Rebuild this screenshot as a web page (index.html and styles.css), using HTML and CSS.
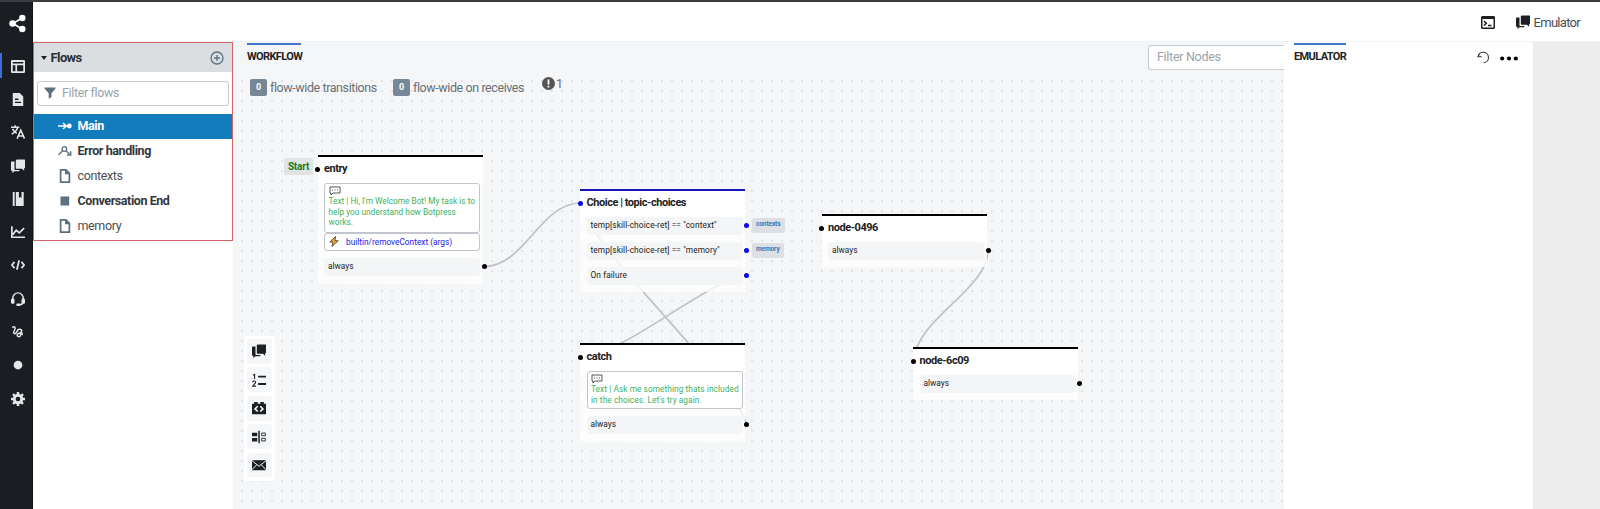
FILE: index.html
```html
<!DOCTYPE html>
<html lang="en">
<head>
<meta charset="utf-8">
<title>Workflow studio</title>
<link rel="stylesheet" href="styles.css">
</head>
<body>
<svg width="0" height="0" class="defs">
  <symbol id="chat" viewBox="0 0 16 16"><path d="M6.500.500h9l.5.500v9l-1 .5v3L12.500 11H6l-.5-.5v-9z"/><path d="M0 3.500l.5-.7H4V12l.5.500H10l-1 1.500H4L1.500 16v-2.500L0 13z"/></symbol>
  <symbol id="doc" viewBox="0 0 16 16"><path fill-rule="evenodd" d="M2 0h7.500L14 4.500V16H2zm2 2v12h8V6H8V2z"/></symbol>
  <symbol id="bubble" viewBox="0 0 12 10"><path d="M1 1h10v6H4L2 9V7H1zM3 4h1m1.500 0h1M8 4h1" fill="none" stroke="#444" stroke-width=".9"/></symbol>
</svg>
<div class="app">
  <nav class="rail">
    <div class="logo"><svg width="17" height="19" viewBox="0 0 17 19"><path d="M13 4L4 9.500 13 15" fill="none" stroke="#fff" stroke-width="1.600"/><circle cx="13.300" cy="4" r="3.200"/><circle cx="3.600" cy="9.500" r="3.300"/><circle cx="13.300" cy="15" r="3.200"/></svg></div>
    <div class="item active"><svg viewBox="0 0 16 16"><path fill-rule="evenodd" d="M1 1h14l1 1v13l-1 1H1l-1-1V2zM2 7v7h3V7zm5 0v7h7V7zM2 3.300V5h12V3.300z"/></svg></div>
    <div class="item"><svg viewBox="0 0 16 16"><path fill-rule="evenodd" d="M2 1h8l4 4v11H2zm2.500 6.500V9H8.500V7.500zm0 3.500v1.500h7V11z"/></svg></div>
    <div class="item"><svg viewBox="0 0 16 16"><path d="M0 2.500h9.500M4.700.200v2.300M.8 10.500C4 8.500 7 6 7.500 3M1.800 4.500C3 7 4.500 8.500 6.500 9.500M7 15.500L11.200 6l4.200 9.500M8.500 12.500h5.500" fill="none" stroke="#e4e6e8" stroke-width="1.800"/></svg></div>
    <div class="item"><svg viewBox="0 0 16 16"><use href="#chat"/></svg></div>
    <div class="item"><svg viewBox="0 0 16 16"><path d="M2 0h2.200v16H2zM5.500 0H9v7l1.500-1.500L12 7V0h2.500v16h-9z"/></svg></div>
    <div class="item"><svg viewBox="0 0 16 16"><path d="M1 1.500v12.500h15M2 11l4-5 3.500 3L15 3.500" fill="none" stroke="#e4e6e8" stroke-width="1.900"/></svg></div>
    <div class="item"><svg viewBox="0 0 16 16"><path d="M4 4.500L1 8l3 3.500M12 4.500L15 8l-3 3.500M9.300 2.500L6.700 13.500" fill="none" stroke="#e4e6e8" stroke-width="2"/></svg></div>
    <div class="item"><svg viewBox="0 0 16 16"><path d="M2 10V7a6 6 0 0 1 12 0v3M13.500 12c0 2-2 2.500-4 2.500" fill="none" stroke="#e4e6e8" stroke-width="1.700"/><rect y="7.500" width="4" height="6" rx="1.500"/><rect x="12" y="7.500" width="4" height="6" rx="1.500"/><rect x="6" y="13" width="5" height="3" rx="1.500"/></svg></div>
    <div class="item"><svg viewBox="0 0 16 16"><path d="M1.500 3C3 1.500 5.500 2 4.500 4.500L3.200 8c-.7 2.500 2 2.500 3 .5L8 5.500C9.500 4 13 5 12 7.500s-5 1.500-5 4 4 2.500 4 0-1-2.500 0-3 2.500 1.500 1.500 3" fill="none" stroke="#e4e6e8" stroke-width="1.700"/></svg></div>
    <div class="item"><svg viewBox="0 0 16 16"><circle cx="8" cy="8" r="5"/></svg></div>
    <div class="item"><svg viewBox="0 0 16 16"><circle cx="8" cy="8" r="4.300" fill="none" stroke="#e4e6e8" stroke-width="3.200"/><path d="M8 0v3M8 13v3M0 8h3M13 8h3M2.300 2.300l2 2M11.700 11.700l2 2M2.300 13.700l2-2M11.700 4.300l2-2" stroke="#e4e6e8" stroke-width="2.800"/></svg></div>
  </nav>
  <div class="main">
    <header class="topbar">
      <svg width="14" height="13" viewBox="0 0 14 13"><path fill-rule="evenodd" d="M1 0h12l1 1v11l-1 1H1l-1-1V1zm.500 3v8.500h11V3z"/><path d="M3 5l2.300 2.200L3 9.500M7 9.500h3.500" fill="none" stroke="#1c1f23" stroke-width="1.500"/></svg>
      <svg class="emu-icon" width="14" height="14" viewBox="0 0 16 16"><use href="#chat"/></svg>
      <span class="emu-text">Emulator</span>
    </header>
    <div class="body">
      <aside class="side">
        <div class="flows">
          <div class="flows-head"><i class="caret"></i><b>Flows</b><svg width="14" height="14" viewBox="0 0 14 14"><circle cx="7" cy="7" r="6" /><path d="M7 4v6M4 7h6"/></svg></div>
          <div class="filter"><svg width="12" height="12" viewBox="0 0 12 12"><path d="M.500.500h11v1L7.500 6.200V10L4.700 11.800V6.200L.500 1.500z"/></svg><span>Filter flows</span></div>
          <div class="row sel"><svg width="14" height="12" viewBox="0 0 14 12"><path d="M0 6h8M5 3l3.200 3L5 9" fill="none" stroke="#fff" stroke-width="1.500"/><circle cx="11.300" cy="6" r="2.400" fill="#fff"/></svg><b>Main</b></div>
          <div class="row"><svg width="14" height="12" viewBox="0 0 14 12"><path d="M.300 9.800L4.500 6M8 5.800L11.500 9M12.700 6.200v3.800H9" fill="none" stroke="#5c7080" stroke-width="1.400"/><circle cx="6.300" cy="4" r="2.300" fill="none" stroke="#5c7080" stroke-width="1.300"/></svg><b>Error handling</b></div>
          <div class="row"><svg width="14" height="14" viewBox="0 0 16 16"><use href="#doc"/></svg><span>contexts</span></div>
          <div class="row"><svg width="14" height="10" viewBox="0 0 14 10"><rect x="2.500" y=".5" width="8.700" height="9"/></svg><b>Conversation End</b></div>
          <div class="row"><svg width="14" height="14" viewBox="0 0 16 16"><use href="#doc"/></svg><span>memory</span></div>
        </div>
      </aside>
      <main class="canvas">
        <div class="dots"></div>
        <div class="canvas-head"><span class="tab">WORKFLOW</span><div class="search">Filter Nodes</div></div>
        <div class="stats"><i>0</i><span class="st1">flow-wide transitions</span><i>0</i><span class="st2">flow-wide on receives</span><svg width="13" height="13" viewBox="0 0 13 13"><circle cx="6.500" cy="6.500" r="6.500" fill="#555"/><path d="M6.500 2.500v5M6.500 8.800v1.700" stroke="#fff" stroke-width="1.800"/></svg><span class="one">1</span></div>
        <svg class="links" viewBox="233 42 1051 467" width="1051" height="467">
          <path d="M484 266.500C525 266.500 540 203 580.500 203"/>
          <path d="M746.500 275.500C710 278 624 355 580.500 357.500"/>
          <path d="M746.500 425C735 378 590 250 580.500 203"/>
          <path d="M988 250C988 290 914 320 914 361.500"/>
        </svg>
        <span class="start">Start</span>
        <section class="node n-entry"><i class="port in"></i><h3>entry</h3>
          <div class="say"><svg width="12" height="10"><use href="#bubble"/></svg><p>Text | Hi, I'm Welcome Bot! My task is to<br>help you understand how Botpress<br>works.</p></div>
          <div class="act"><svg width="10" height="11" viewBox="0 0 10 11"><path d="M6.500.500L.800 6h3L3 10.500 9.200 4.700H6z" fill="#f2a93b" stroke="#3d3325" stroke-width=".8"/></svg><span>builtin/removeContext (args)</span></div>
          <div class="cond">always<i class="port"></i></div>
        </section>
        <section class="node skill n-choice"><i class="port in"></i><h3>Choice | topic-choices</h3>
          <div class="cond">temp[skill-choice-ret] == "context"<i class="port"></i><em>contexts</em></div>
          <div class="cond">temp[skill-choice-ret] == "memory"<i class="port"></i><em>memory</em></div>
          <div class="cond">On failure<i class="port"></i></div>
        </section>
        <section class="node n-catch"><i class="port in"></i><h3>catch</h3>
          <div class="say"><svg width="12" height="10"><use href="#bubble"/></svg><p>Text | Ask me something thats included<br>in the choices. Let's try again.</p></div>
          <div class="cond">always<i class="port"></i></div>
        </section>
        <section class="node n-0496"><i class="port in"></i><h3>node-0496</h3><div class="cond">always<i class="port"></i></div></section>
        <section class="node n-6c09"><i class="port in"></i><h3>node-6c09</h3><div class="cond">always<i class="port"></i></div></section>
        <div class="tools">
          <div><svg viewBox="0 0 16 16"><use href="#chat"/></svg></div>
          <div><svg viewBox="0 0 16 16"><path d="M1 2.500l2-1V7M.800 10.500C1 8.500 4.500 8.800 4 11c-.3 1.500-3 2.500-3.200 4H4.500" fill="none" stroke="#1c1f23" stroke-width="1.200"/><path d="M7 3h9v2.200H7zM7 11.500h9v2.200H7z"/></svg></div>
          <div><svg viewBox="0 0 16 16"><path d="M0 3h2.500V1h4v2h3V1h4v2H16v12H0z"/><path d="M6.500 6L3.500 9l3 3M9.500 6l3 3-3 3" fill="none" stroke="#fff" stroke-width="1.800"/></svg></div>
          <div><svg viewBox="0 0 16 16"><path d="M0 3h6v4H0zM0 9h6v4H0zM7.200.800h1.700v14.400H7.200z"/><path d="M11 3.500h4.300v3H11zM11 9.500h4.300v3H11z" fill="none" stroke="#1c1f23"/></svg></div>
          <div><svg viewBox="0 0 16 16"><path d="M0 2.500h16v11.500H0z"/><path d="M0 3l8 6.500L16 3M0 13.500l5.500-6M16 13.500l-5.500-6" fill="none" stroke="#f5f6f8" stroke-width="1.100"/></svg></div>
        </div>
      </main>
      <aside class="emulator"><span class="tab emu-tab">EMULATOR</span><svg class="undo" width="13" height="13" viewBox="0 0 13 13"><path d="M1 5.500A5.300 5.300 0 1 1 6.500 11.800M.3 5.700h4.500M1 5.500l1.500-2.200" fill="none" stroke="#333" stroke-width="1.100"/></svg><svg width="18" height="5" viewBox="0 0 18 5"><circle cx="2.200" cy="2.500" r="2.100"/><circle cx="9" cy="2.500" r="2.100"/><circle cx="15.800" cy="2.500" r="2.100"/></svg></aside>
      <div class="gutter"></div>
    </div>
  </div>
</div>
</body>
</html>
```
FILE: styles.css
```css
* { box-sizing: border-box; }
body { margin: 0; height: 509px; overflow: hidden; font-family: Roboto, "Liberation Sans", sans-serif; font-size: 12.500px; color: #4a4f54; background: #fff; }
.defs { position: absolute; }
svg { display: block; flex: none; }
.app { display: flex; height: 509px; border-top: 2px solid #3d3c40; }
.rail { width: 33px; background: #1a1d21; border-right: 1px solid #101214; flex: none; }
.rail svg { fill: #e4e6e8; }
.logo { height: 47px; padding: 12px 0 0 8.500px; }
.logo svg { fill: #fff; }
.item { height: 33.300px; display: flex; align-items: center; padding-left: 11.300px; }
.item svg { width: 14px; height: 14px; }
.active { background: linear-gradient(#3a6fd8, #3a6fd8) 0 50% / 2px 25px no-repeat; }
.main { flex: 1; display: flex; flex-direction: column; min-width: 0; }
.topbar { height: 40px; display: flex; align-items: center; justify-content: flex-end; padding: 1px 20px 0 0; border-bottom: 1px solid #f2f3f4; }
.topbar svg { fill: #1c1f23; }
.emu-icon { margin: 0 4px 0 21px; }
.emu-text { font-size: 13px; width: 46.500px; white-space: nowrap; letter-spacing: -.7px; }
.body { flex: 1; display: flex; min-height: 0; }
.side { width: 200px; flex: none; background: #fff; }
.flows { height: 199px; border: 1px solid #d4666b; }
.flows-head { height: 29px; background: #dadee1; display: flex; align-items: center; padding: 0 8px 0 7px; font-size: 13px; letter-spacing: -.6px; color: #2c3135; }
.caret { border: 3.500px solid transparent; border-top: 4px solid #222; border-bottom: 0; margin-right: 3.500px; }
.flows-head svg { margin-left: auto; fill: none; stroke: #5c7080; stroke-width: 1.300; }
.filter { margin: 9px 3px 8px 3px; height: 25px; border: 1px solid #c8cdd1; border-radius: 3px; display: flex; align-items: center; color: #9aa3ab; padding: 0 0 2px 6px; letter-spacing: -.35px; }
.filter svg { fill: #5c7080; margin: 1px 6px 0 0; }
.row { height: 25px; padding: 0 0 2px 24px; display: flex; align-items: center; gap: 5.500px; letter-spacing: -.38px; }
.row svg { fill: #5c7080; margin-top: 1.500px; }
.row b { letter-spacing: -.42px; color: #33383d; }
.row.sel { background: #137cbd; }
.row.sel b { letter-spacing: -.4px; color: #fff; }
.canvas { position: relative; width: 1051px; background: #f4f6f8; flex: none; overflow: hidden; }
.dots { position: absolute; inset: 34px 0 0 4px; background: radial-gradient(circle, #e0e2e5 0 .8px, transparent 1.400px) 0 0 / 10px 10px; }
.canvas-head { position: relative; display: flex; justify-content: space-between; padding-left: 14px; height: 32px; }
.tab { border-top: 2px solid #4374c8; margin-top: 1px; font-weight: 700; font-size: 11px; letter-spacing: -.62px; line-height: 14px; padding-top: 5px; height: 24px; color: #1f2326; width: 54px; white-space: nowrap; }
.emu-tab { width: 52px; letter-spacing: -.62px; }
.search { margin-top: 3px; width: 136px; height: 25px; border: 1px solid #c6ccd2; border-right: 0; border-radius: 3px 0 0 3px; background: #fff; color: #9aa3ab; line-height: 22px; padding-left: 8px; letter-spacing: -.3px; }
.stats { position: relative; display: flex; align-items: center; height: 24px; margin: 1px 0 0 17px; color: #6a7075; white-space: nowrap; letter-spacing: -.41px; }
.stats i { background: #768896; color: #fff; font: 700 9px/17px Roboto; width: 17px; height: 17px; border-radius: 2px; text-align: center; margin-right: 3px; }
.st1 { width: 123px; }
.st2 { width: 128.500px; }
.stats svg, .one { transform: translateY(-4px); }
.one { margin-left: 1.500px; }
.links { position: absolute; left: 0; top: 0; fill: none; stroke: #bfc2c6; stroke-width: 1.700; }
.start { position: absolute; left: 51px; top: 116px; width: 29px; height: 17px; border-radius: 2px; background: #e0e4e5; color: #1c7a24; font: 700 10px/17px Roboto; letter-spacing: -.2px; text-align: center; }
.node { position: absolute; width: 165px; background: linear-gradient(#fff 0 24px, rgba(255,255,255,.75) 30px); border-top: 2px solid #000; padding: 6px 2.500px 0 6.500px; }
.node h3 { margin: 0 0 7.500px; font-size: 11px; line-height: 12px; letter-spacing: -.46px; color: #222; }
.skill { border-color: #1616b4; }
.n-entry { left: 84.500px; top: 113px; height: 129px; }
.n-choice { left: 347px; top: 147px; height: 103px; }
.n-catch { left: 347px; top: 301px; height: 99px; }
.n-0496 { left: 588.500px; top: 172px; height: 53px; }
.n-6c09 { left: 680px; top: 305px; height: 53px; }
.port { position: absolute; right: -6.500px; top: 6px; width: 5px; height: 5px; border-radius: 50%; background: #000; }
.in { left: -2.500px; top: 10px; right: auto; }
.skill .port { background: #0808e8; }
.cond { position: relative; height: 18px; line-height: 17px; margin-bottom: 7.300px; background: #f4f5f7; border-radius: 4px; font-size: 8.300px; padding-left: 4px; white-space: nowrap; color: #222; }
.skill .cond { letter-spacing: .1px; }
.cond em { position: absolute; left: 165px; top: 1.500px; height: 14.500px; padding: 0 4.500px; background: #dce0e4; border-radius: 2px; color: #3d76bd; font: 700 6.600px/13px Roboto; letter-spacing: -.15px; }
.say, .act { border: 1px solid #c2c6cc; border-radius: 3px; background: #fff; font-size: 8.300px; white-space: nowrap; }
.say { padding: 2.500px 3.500px; height: 50px; color: #3bb25f; }
.say p { margin: 0; line-height: 10.500px; }
.act { height: 18.500px; color: #2222ea; display: flex; align-items: center; gap: 7px; padding-left: 4px; margin-bottom: 6.500px; }
.n-catch .say { height: 38.500px; margin-bottom: 7px; }
.n-catch p { letter-spacing: .07px; }
.tools { position: absolute; left: 10.500px; top: 294px; width: 31.500px; height: 144.500px; background: #fff; border-radius: 3px; padding: 3px; display: flex; flex-direction: column; gap: 3.400px; }
.tools div { flex: 1; background: #f5f6f8; border-radius: 4px; display: flex; align-items: center; justify-content: center; }
.tools svg { width: 14px; height: 14px; fill: #1c1f23; }
.emulator { width: 249px; flex: none; background: #fff; display: flex; padding: 0 15px 0 10px; }
.emulator > svg { margin-top: 14px; }
.emulator .undo { margin: 9px 10px 0 auto; }
.gutter { flex: 1; background: #ededed; }
```
